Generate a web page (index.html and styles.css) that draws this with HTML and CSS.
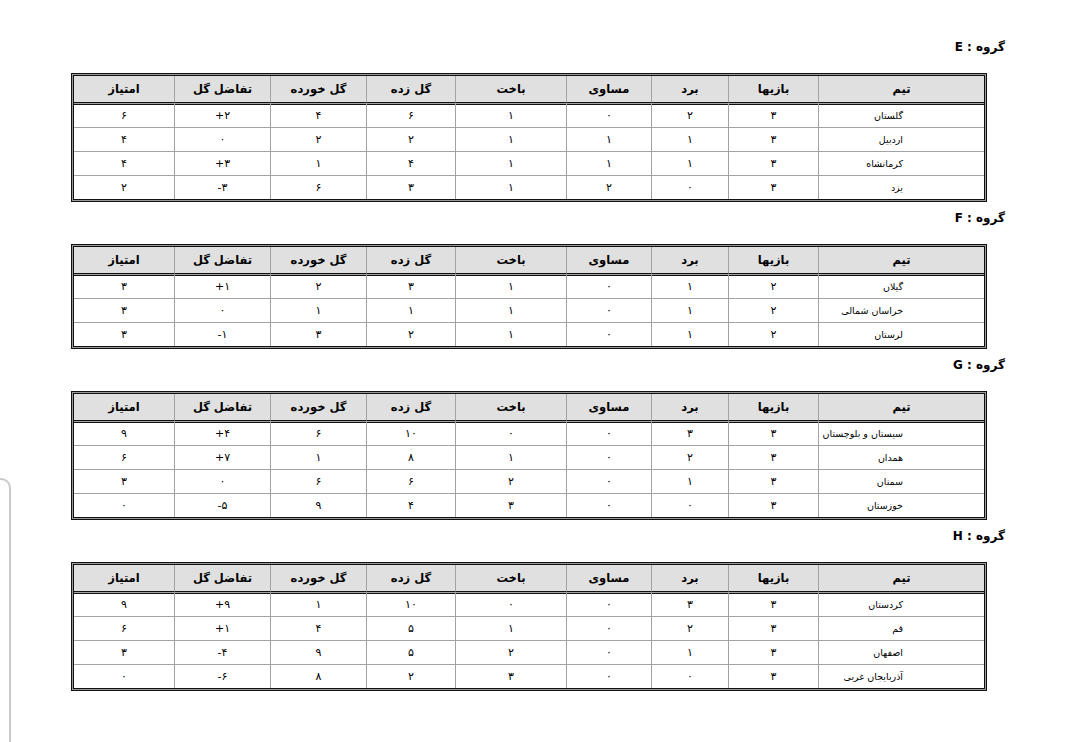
FILE: index.html
```html
<!DOCTYPE html>
<html lang="fa">
<head>
<meta charset="utf-8">
<title>جدول گروه‌ها</title>
<link rel="stylesheet" href="styles.css">
</head>
<body>
<div class="side-tab"></div>
<main class="page" dir="rtl">

  <section class="group">
    <h2 class="group-title">گروه : E</h2>
    <div class="frame">
      <table class="standings">
        <colgroup>
          <col class="c-team"><col class="c-played"><col class="c-win"><col class="c-draw"><col class="c-loss"><col class="c-gf"><col class="c-ga"><col class="c-gd"><col class="c-pts">
        </colgroup>
        <thead>
          <tr><th>تیم</th><th>بازیها</th><th>برد</th><th>مساوی</th><th>باخت</th><th>گل زده</th><th>گل خورده</th><th>تفاضل گل</th><th>امتیاز</th></tr>
        </thead>
        <tbody>
          <tr><td class="team">گلستان</td><td>۳</td><td>۲</td><td>۰</td><td>۱</td><td>۶</td><td>۴</td><td><span class="num">+۲</span></td><td>۶</td></tr>
          <tr><td class="team">اردبیل</td><td>۳</td><td>۱</td><td>۱</td><td>۱</td><td>۲</td><td>۲</td><td><span class="num">۰</span></td><td>۴</td></tr>
          <tr><td class="team">کرمانشاه</td><td>۳</td><td>۱</td><td>۱</td><td>۱</td><td>۴</td><td>۱</td><td><span class="num">+۳</span></td><td>۴</td></tr>
          <tr><td class="team">یزد</td><td>۳</td><td>۰</td><td>۲</td><td>۱</td><td>۳</td><td>۶</td><td><span class="num">-۳</span></td><td>۲</td></tr>
        </tbody>
      </table>
    </div>
  </section>

  <section class="group">
    <h2 class="group-title">گروه : F</h2>
    <div class="frame">
      <table class="standings">
        <colgroup>
          <col class="c-team"><col class="c-played"><col class="c-win"><col class="c-draw"><col class="c-loss"><col class="c-gf"><col class="c-ga"><col class="c-gd"><col class="c-pts">
        </colgroup>
        <thead>
          <tr><th>تیم</th><th>بازیها</th><th>برد</th><th>مساوی</th><th>باخت</th><th>گل زده</th><th>گل خورده</th><th>تفاضل گل</th><th>امتیاز</th></tr>
        </thead>
        <tbody>
          <tr><td class="team">گیلان</td><td>۲</td><td>۱</td><td>۰</td><td>۱</td><td>۳</td><td>۲</td><td><span class="num">+۱</span></td><td>۳</td></tr>
          <tr><td class="team">خراسان شمالی</td><td>۲</td><td>۱</td><td>۰</td><td>۱</td><td>۱</td><td>۱</td><td><span class="num">۰</span></td><td>۳</td></tr>
          <tr><td class="team">لرستان</td><td>۲</td><td>۱</td><td>۰</td><td>۱</td><td>۲</td><td>۳</td><td><span class="num">-۱</span></td><td>۳</td></tr>
        </tbody>
      </table>
    </div>
  </section>

  <section class="group">
    <h2 class="group-title">گروه : G</h2>
    <div class="frame">
      <table class="standings">
        <colgroup>
          <col class="c-team"><col class="c-played"><col class="c-win"><col class="c-draw"><col class="c-loss"><col class="c-gf"><col class="c-ga"><col class="c-gd"><col class="c-pts">
        </colgroup>
        <thead>
          <tr><th>تیم</th><th>بازیها</th><th>برد</th><th>مساوی</th><th>باخت</th><th>گل زده</th><th>گل خورده</th><th>تفاضل گل</th><th>امتیاز</th></tr>
        </thead>
        <tbody>
          <tr><td class="team">سیستان و بلوچستان</td><td>۳</td><td>۳</td><td>۰</td><td>۰</td><td>۱۰</td><td>۶</td><td><span class="num">+۴</span></td><td>۹</td></tr>
          <tr><td class="team">همدان</td><td>۳</td><td>۲</td><td>۰</td><td>۱</td><td>۸</td><td>۱</td><td><span class="num">+۷</span></td><td>۶</td></tr>
          <tr><td class="team">سمنان</td><td>۳</td><td>۱</td><td>۰</td><td>۲</td><td>۶</td><td>۶</td><td><span class="num">۰</span></td><td>۳</td></tr>
          <tr><td class="team">خوزستان</td><td>۳</td><td>۰</td><td>۰</td><td>۳</td><td>۴</td><td>۹</td><td><span class="num">-۵</span></td><td>۰</td></tr>
        </tbody>
      </table>
    </div>
  </section>

  <section class="group">
    <h2 class="group-title">گروه : H</h2>
    <div class="frame">
      <table class="standings">
        <colgroup>
          <col class="c-team"><col class="c-played"><col class="c-win"><col class="c-draw"><col class="c-loss"><col class="c-gf"><col class="c-ga"><col class="c-gd"><col class="c-pts">
        </colgroup>
        <thead>
          <tr><th>تیم</th><th>بازیها</th><th>برد</th><th>مساوی</th><th>باخت</th><th>گل زده</th><th>گل خورده</th><th>تفاضل گل</th><th>امتیاز</th></tr>
        </thead>
        <tbody>
          <tr><td class="team">کردستان</td><td>۳</td><td>۳</td><td>۰</td><td>۰</td><td>۱۰</td><td>۱</td><td><span class="num">+۹</span></td><td>۹</td></tr>
          <tr><td class="team">قم</td><td>۳</td><td>۲</td><td>۰</td><td>۱</td><td>۵</td><td>۴</td><td><span class="num">+۱</span></td><td>۶</td></tr>
          <tr><td class="team">اصفهان</td><td>۳</td><td>۱</td><td>۰</td><td>۲</td><td>۵</td><td>۹</td><td><span class="num">-۴</span></td><td>۳</td></tr>
          <tr><td class="team">آذربایجان غربی</td><td>۳</td><td>۰</td><td>۰</td><td>۳</td><td>۲</td><td>۸</td><td><span class="num">-۶</span></td><td>۰</td></tr>
        </tbody>
      </table>
    </div>
  </section>

</main>
</body>
</html>
```

FILE: styles.css
```css
html, body {
  margin: 0;
  padding: 0;
  background: #ffffff;
}

body {
  font-family: "DejaVu Sans", sans-serif;
  color: #000000;
  position: relative;
  min-height: 742px;
}

.side-tab {
  position: absolute;
  left: -20px;
  top: 478px;
  width: 27px;
  height: 262px;
  border: 2px solid #c9c9c9;
  border-bottom: 0;
  border-radius: 10px 10px 0 0;
}

.page {
  margin-left: 71px;
  width: 934px;
  padding-top: 37px;
}

.group {
  margin: 0 0 6px 0;
}

.group-title {
  margin: 0 0 16px 0;
  height: 20px;
  line-height: 20px;
  font-family: "DejaVu Sans", sans-serif;
  font-weight: bold;
  font-size: 12px;
  text-align: right;
}

.frame {
  margin-right: 18px;
  border: 1px solid #111111;
  padding: 1px;
  background: #9a9a9a;
}

.standings {
  width: 100%;
  table-layout: fixed;
  border-collapse: separate;
  border-spacing: 0;
  border: 1px solid #111111;
  background: #ffffff;
}

.c-team { width: 166px; }
.c-played { width: 90px; }
.c-win { width: 77px; }
.c-draw { width: 85px; }
.c-loss { width: 111px; }
.c-gf { width: 89px; }
.c-ga { width: 96px; }
.c-gd { width: 96px; }
.c-pts { width: 100px; }

.standings th,
.standings td {
  padding: 0;
  text-align: center;
  border-left: 1px solid #a3a3a3;
  white-space: nowrap;
  overflow: hidden;
}

.standings th:last-child,
.standings td:last-child {
  border-left: 0;
}

.standings th {
  height: 26px;
  background: #e0e0e0;
  font-weight: bold;
  font-size: 11.5px;
  border-bottom: 1px solid #111111;
}

.standings td {
  height: 23px;
  font-size: 11px;
  border-top: 1px solid #a3a3a3;
}

.standings tbody tr:first-child td {
  box-shadow: inset 0 1px 0 #111111;
}

.standings td.team {
  text-align: right;
  padding-right: 81px;
  font-size: 9.5px;
}

.num {
  direction: ltr;
  unicode-bidi: bidi-override;
}
```
